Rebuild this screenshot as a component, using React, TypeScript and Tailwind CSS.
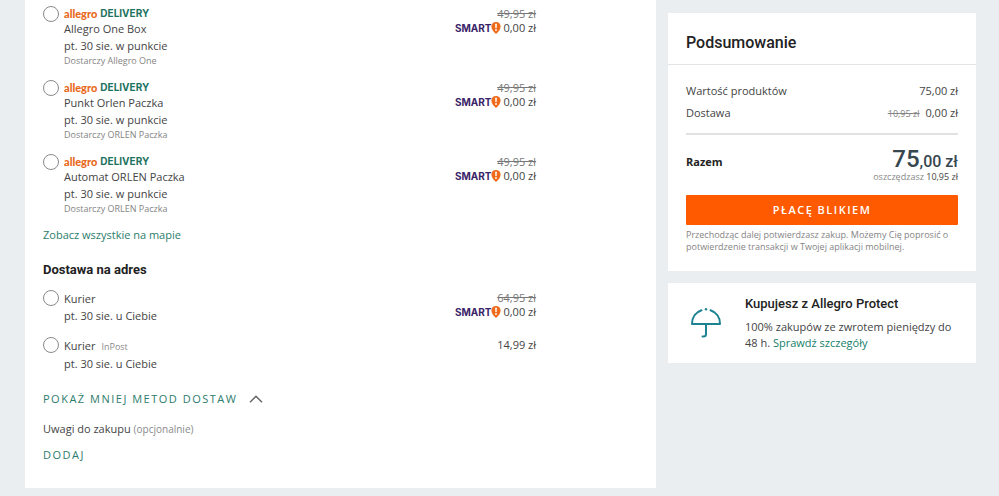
import { useState } from "react";

type Option = {
  id: string;
  name: string;
  date: string;
  oldPrice?: string;
  price: string;
  supplier?: string;
  note?: string;
};

const pickupOptions: Option[] = [
  { id: "one-box", name: "Allegro One Box", date: "pt. 30 sie. w punkcie", supplier: "Dostarczy Allegro One", oldPrice: "49,95 zł", price: "0,00 zł" },
  { id: "orlen-punkt", name: "Punkt Orlen Paczka", date: "pt. 30 sie. w punkcie", supplier: "Dostarczy ORLEN Paczka", oldPrice: "49,95 zł", price: "0,00 zł" },
  { id: "orlen-automat", name: "Automat ORLEN Paczka", date: "pt. 30 sie. w punkcie", supplier: "Dostarczy ORLEN Paczka", oldPrice: "49,95 zł", price: "0,00 zł" },
];

const addressOptions: Option[] = [
  { id: "kurier", name: "Kurier", date: "pt. 30 sie. u Ciebie", oldPrice: "64,95 zł", price: "0,00 zł" },
  { id: "kurier-inpost", name: "Kurier", note: "InPost", date: "pt. 30 sie. u Ciebie", price: "14,99 zł" },
];

function DeliveryLogo() {
  return (
    <span className="flex h-[15px] items-center gap-[3px] whitespace-nowrap font-['Lato',sans-serif] text-[11px] leading-[15px]">
      <span className="font-black text-[#e8681a]">allegro</span>
      <span className="font-['Inter',sans-serif] text-[10px] font-bold text-[#1c7360]">DELIVERY</span>
    </span>
  );
}

function SmartLogo() {
  return (
    <span className="flex items-center font-['Inter',sans-serif] text-[10px] font-bold text-[#3a2468]">
      SMART
      <svg viewBox="0 0 10 12" className="h-3 w-[10px]" aria-hidden="true">
        <path d="M5 0.1C7.8 0.1 9.6 2 9.6 4.6C9.6 7.4 7.6 10 5 11.9C2.4 10 0.4 7.4 0.4 4.6C0.4 2 2.2 0.1 5 0.1Z" fill="#ef6b1a" />
        <path d="M5 2.2V5.6" stroke="#fff" strokeWidth="1.5" strokeLinecap="round" />
        <circle cx="5" cy="8" r="0.9" fill="#fff" />
      </svg>
    </span>
  );
}

function DeliveryOption({ option, checked, onSelect }: { option: Option; checked: boolean; onSelect: () => void }) {
  return (
    <div className="flex items-start">
      <input
        type="radio"
        id={option.id}
        name="delivery"
        checked={checked}
        onChange={onSelect}
        className="size-4 shrink-0 appearance-none rounded-full border border-[#8a8a8a] bg-white checked:border-4 checked:border-[#1c7360]"
      />
      <label htmlFor={option.id} className="ml-[5px] flex-1">
        {option.supplier && <DeliveryLogo />}
        <span className={option.supplier ? "block leading-4" : "block leading-[17px]"}>
          {option.name}
          {option.note && <span className="ml-[6px] text-[9px] text-[#8a8a8a]">{option.note}</span>}
        </span>
        <span className="block leading-[18px]">{option.date}</span>
        {option.supplier && <span className="block text-[9px] leading-[11px] text-[#858585]">{option.supplier}</span>}
      </label>
      <div className="flex flex-col items-end pt-px leading-[14px]">
        {option.oldPrice && <s className="text-[#777]">{option.oldPrice}</s>}
        <span className="flex items-center gap-[2px]">
          {option.oldPrice && <SmartLogo />}
          {option.price}
        </span>
      </div>
    </div>
  );
}

export default function App() {
  const [selected, setSelected] = useState("");
  const renderOption = (option: Option) => (
    <DeliveryOption key={option.id} option={option} checked={selected === option.id} onSelect={() => setSelected(option.id)} />
  );

  return (
    <div className="flex min-h-screen items-start gap-3 bg-[#eaeef1] pr-[23px] pl-[25px] font-['Open_Sans',sans-serif] text-[11px] text-[#444]">
      <main className="flex-1 bg-white px-[18px] pt-[6px] pb-[23px]">
        <div className="mr-[102px]">
          <div className="flex flex-col gap-[14px]">{pickupOptions.map(renderOption)}</div>
          <a href="#mapa" className="mt-[13px] block leading-4 text-[#2d7c6c]">Zobacz wszystkie na mapie</a>
          <h2 className="mt-[17px] font-['Roboto',sans-serif] text-[13px] leading-5 font-bold text-[#222]">Dostawa na adres</h2>
          <div className="mt-[10px] flex flex-col gap-3">{addressOptions.map(renderOption)}</div>
        </div>
        <button type="button" className="mt-4 flex items-center gap-3 leading-5 tracking-[1.5px] text-[#2d7c6c]">
          POKAŻ MNIEJ METOD DOSTAW
          <svg viewBox="0 0 14 8" className="h-2 w-[14px]" fill="none" stroke="#666" strokeWidth="1.5" aria-hidden="true">
            <path d="M1 7.2L7 1.2L13 7.2" />
          </svg>
        </button>
        <p className="mt-[10px] leading-5">
          Uwagi do zakupu <span className="text-[10px] text-[#8a8a8a]">(opcjonalnie)</span>
        </p>
        <button type="button" className="mt-[6px] block leading-5 tracking-[1.5px] text-[#2d7c6c]">DODAJ</button>
      </main>

      <aside className="w-[308px] shrink-0 pt-[13px]">
        <section className="bg-white">
          <h2 className="border-b border-[#e2e5e7] px-[18px] pt-5 pb-[11px] font-['Roboto',sans-serif] text-base leading-5 font-medium text-[#222]">Podsumowanie</h2>
          <div className="px-[18px] pt-[15px] pb-[18px]">
            <div className="flex justify-between leading-[22px]">
              <span>Wartość produktów</span>
              <span>75,00 zł</span>
            </div>
            <div className="flex items-baseline justify-between leading-[22px]">
              <span>Dostawa</span>
              <span className="flex items-baseline gap-[6px]">
                <s className="text-[9px] text-[#858585]">10,95 zł</s>
                <span>0,00 zł</span>
              </span>
            </div>
            <div className="mt-2 flex items-start justify-between border-t-2 border-[#e0e2e4] pt-[14px]">
              <strong className="leading-[26px] text-[#222]">Razem</strong>
              <div className="text-right">
                <div className="flex h-[22px] items-baseline justify-end font-['Roboto',sans-serif] text-base leading-5 font-medium text-[#37474f]">
                  <span className="text-2xl leading-5">75</span>
                  <span>,00 zł</span>
                </div>
                <div className="text-[9px] leading-3 text-[#8a8a8a]">
                  oszczędzasz <span className="text-[#444]">10,95 zł</span>
                </div>
              </div>
            </div>
            <button type="button" className="mt-3 block h-[30px] w-full rounded-[1px] bg-[#ff5a00] font-semibold tracking-[1.5px] text-white">PŁACĘ BLIKIEM</button>
            <p className="mt-1 text-[9px] leading-3 text-[#858585]">
              Przechodząc dalej potwierdzasz zakup. Możemy Cię poprosić o potwierdzenie transakcji w Twojej aplikacji mobilnej.
            </p>
          </div>
        </section>

        <section className="mt-3 flex gap-6 bg-white px-[23px] pt-[11px] pb-3">
          <svg viewBox="0 0 30 32" className="mt-[13px] h-8 w-[30px] shrink-0" fill="none" stroke="#1d8291" strokeWidth="2" strokeLinecap="round" strokeLinejoin="round" aria-hidden="true">
            <path d="M10.5 3.2C5 5 1 10 1 17H29C29 10 25 5 19.5 3.2M15 17V27Q15 29.5 12.5 29.5H11.5" />
            <circle cx="15" cy="2.2" r="1.2" fill="#1d8291" stroke="none" />
          </svg>
          <div>
            <h3 className="font-['Roboto',sans-serif] text-[13px] leading-5 font-medium text-[#222]">Kupujesz z Allegro Protect</h3>
            <p className="mt-[5px] leading-4">
              100% zakupów ze zwrotem pieniędzy do 48 h. <a href="#protect" className="text-[#16806c]">Sprawdź szczegóły</a>
            </p>
          </div>
        </section>
      </aside>
    </div>
  );
}
